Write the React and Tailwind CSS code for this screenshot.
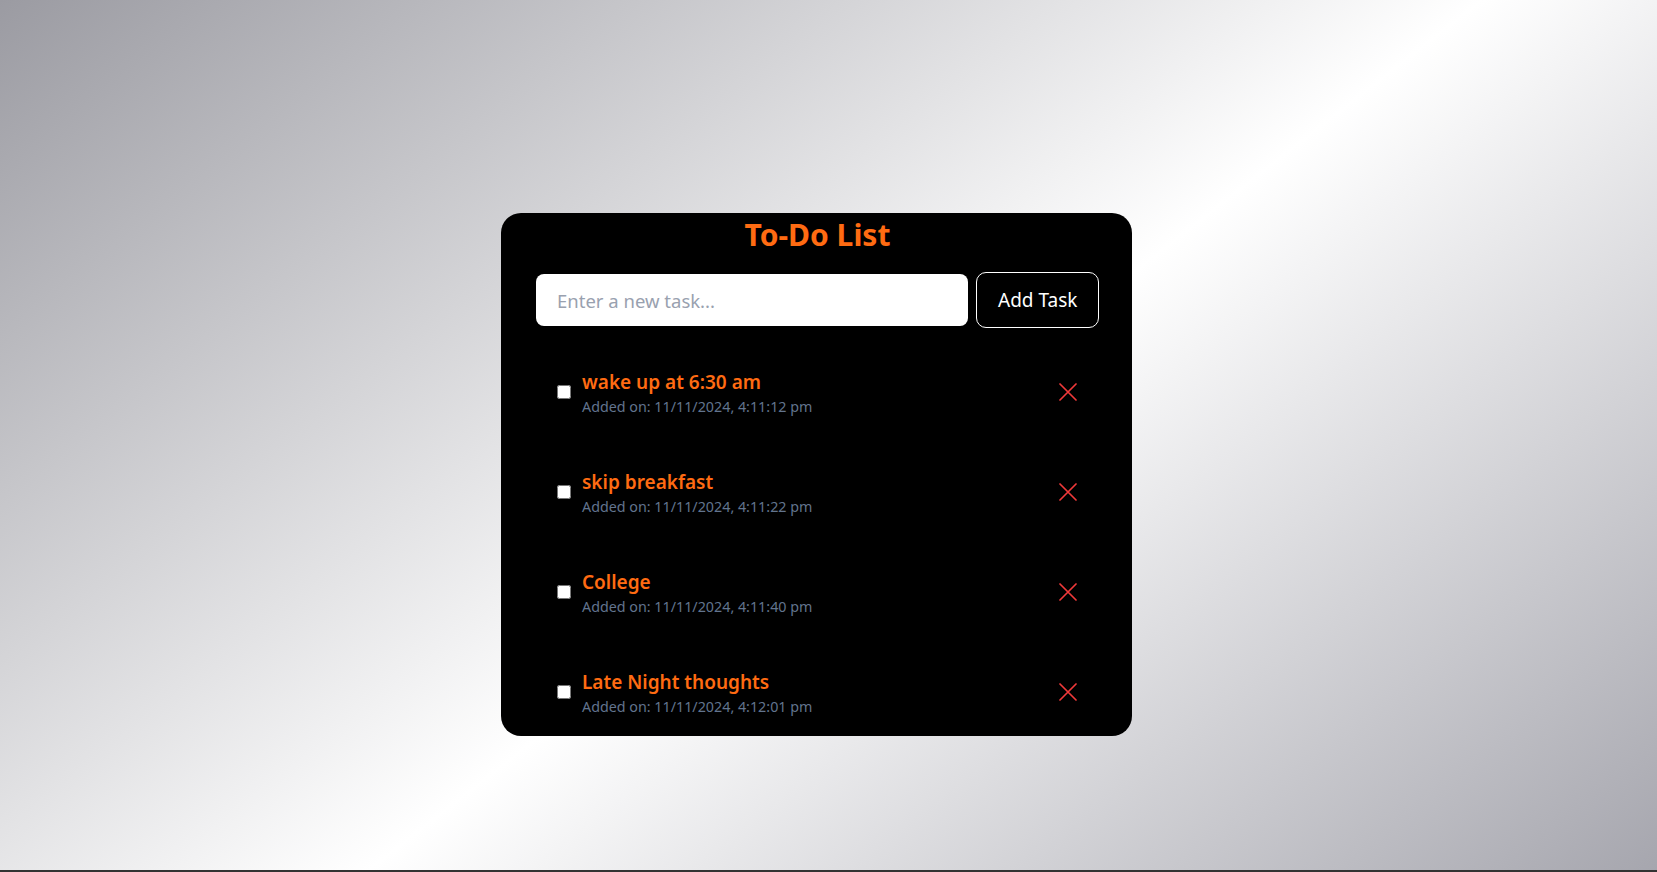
import {useState} from 'react'

const initialTasks=[
  {id:1,text:'wake up at 6:30 am',added:'11/11/2024, 4:11:12 pm',done:false},
  {id:2,text:'skip breakfast',added:'11/11/2024, 4:11:22 pm',done:false},
  {id:3,text:'College',added:'11/11/2024, 4:11:40 pm',done:false},
  {id:4,text:'Late Night thoughts',added:'11/11/2024, 4:12:01 pm',done:false},
]

const Cross=()=>(
  <svg width="18" height="18" viewBox="0 0 18 18" fill="none" stroke="#f0393a" strokeWidth="1.7" strokeLinecap="round">
    <path d="M1 1 L17 17 M17 1 L1 17"/>
  </svg>
)

const App=()=>{
  const [tasks,setTasks]=useState(initialTasks)
  const [text,setText]=useState('')

  const addTask=()=>{
    if(text.trim()==='') return
    setTasks([...tasks,{id:Date.now(),text,added:new Date().toLocaleString(),done:false}])
    setText('')
  }
  const toggle=(id)=>setTasks(tasks.map(t=>t.id===id?{...t,done:!t.done}:t))
  const remove=(id)=>setTasks(tasks.filter(t=>t.id!==id))

  return(
    <div className="h-screen flex flex-col font-['Noto_Sans','Open_Sans',sans-serif]">
      <div className="flex-1 flex justify-center pt-[213px] pr-[24px] bg-[linear-gradient(142deg,#9b9ba2_0%,#ffffff_53.5%,#a6a6ae_100%)]">
        <div className="w-[631px] h-[523px] bg-black rounded-[20px] overflow-hidden pl-[35px] pr-[33px] pt-[4px]">
          <h1 className="text-[30px] leading-[36px] font-bold text-center text-[#ff6b12]">To-Do List</h1>
          <div className="flex items-center gap-[8px] mt-[19px]">
            <input
              className="w-[434px] h-[52px] rounded-[8px] bg-white px-[21px] text-[18.5px] text-gray-800 placeholder:text-gray-400 outline-none"
              placeholder="Enter a new task..."
              value={text}
              onChange={(e)=>setText(e.target.value)}
            />
            <button onClick={addTask} className="w-[123px] h-[56px] rounded-[10px] border border-white text-white text-[19px]">Add Task</button>
          </div>
          <ul className="mt-[14px]">
            {tasks.map((t)=>(
              <li key={t.id} className="h-[100px] flex items-center pl-[21px] pr-[22px]">
                <input type="checkbox" checked={t.done} onChange={()=>toggle(t.id)} className="w-[14px] h-[14px]"/>
                <div className="ml-[11px] flex-1">
                  <p className={"text-[19px] leading-[28px] font-semibold text-[#ff6b12] "+(t.done?'line-through':'')}>{t.text}</p>
                  <p className="text-[14.3px] leading-[20px] mt-[1px] text-slate-500">Added on: {t.added}</p>
                </div>
                <button onClick={()=>remove(t.id)}><Cross/></button>
              </li>
            ))}
          </ul>
        </div>
      </div>
      <div className="h-[2px] bg-[#333]"></div>
    </div>
  )
}
export default App
